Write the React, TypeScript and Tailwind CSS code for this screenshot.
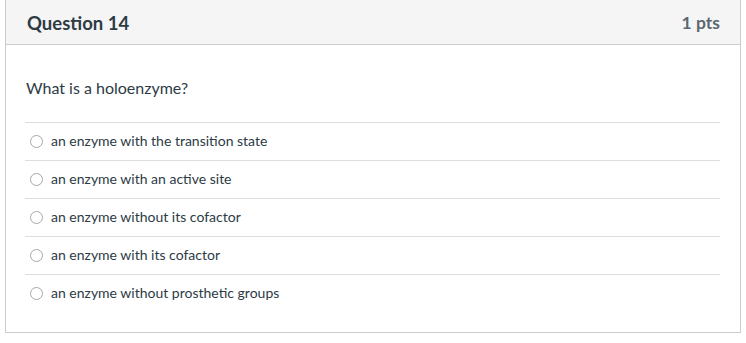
import React from "react";

const options = [
  "an enzyme with the transition state",
  "an enzyme with an active site",
  "an enzyme without its cofactor",
  "an enzyme with its cofactor",
  "an enzyme without prosthetic groups",
];

export default function App() {
  return (
    <div className="w-[746px] h-[343px] bg-white pl-[5px]" style={{ fontFamily: "Lato, 'Noto Sans', sans-serif" }}>
      <div className="w-[736px] border border-t-0 border-[#c7cdd1] bg-white">
        <div className="h-[45px] bg-[#f5f5f5] border-b border-[#c7cdd1] flex items-center justify-between pl-[21px] pr-[20px]">
          <span className="text-[18.5px] font-bold text-[#2d3b45] leading-[24px] pt-[1px]">Question 14</span>
          <span className="text-[17.5px] font-bold text-[#5b6770] leading-[24px] pt-[1px]">1 pts</span>
        </div>
        <div className="pt-[33px] pb-[20px]">
          <div className="pl-[20px] text-[16px] leading-[20px] text-[#2d3b45]">What is a holoenzyme?</div>
          <div className="mt-[24px] ml-[19px] mr-[20px]">
            {options.map((o) => (
              <div key={o} className="h-[38px] border-t border-[#dcdfe2] flex items-center">
                <span className="ml-[5px] w-[13px] h-[13px] rounded-full border border-[#a7a7a7] bg-white shrink-0" />
                <span className="ml-[8px] text-[14px] leading-[18px] text-[#2d3b45] pb-[1px]">{o}</span>
              </div>
            ))}
          </div>
        </div>
      </div>
    </div>
  );
}
